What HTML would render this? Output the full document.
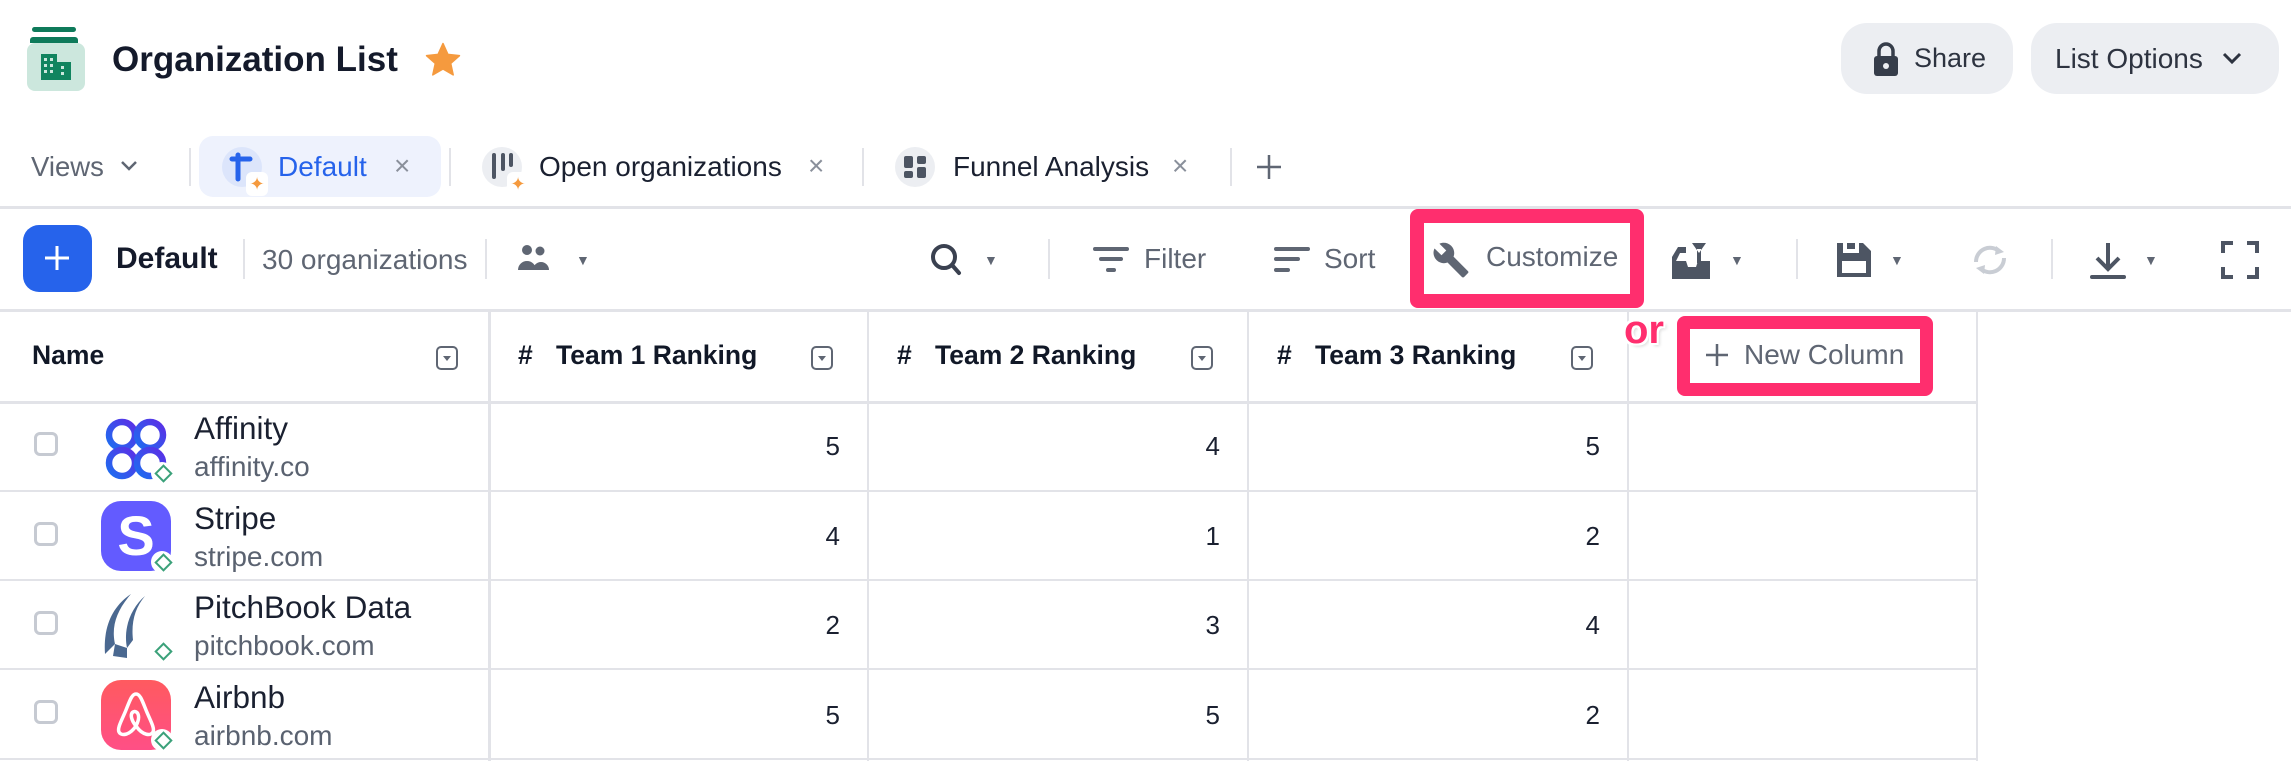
<!DOCTYPE html>
<html><head><meta charset="utf-8"><style>
*{box-sizing:border-box;margin:0;padding:0}
body{width:2291px;height:761px;background:#fff;font-family:"Liberation Sans",sans-serif;position:relative;overflow:hidden;color:#1a202c}
.a{position:absolute}
.t{position:absolute;white-space:nowrap;line-height:1}
.vl{position:absolute;width:2px;background:#e2e3e8}
.hl{position:absolute;height:2px;background:#e2e3e8}
.btn{position:absolute;background:#eceef2;border-radius:26px}
.cb{position:absolute;width:24px;height:24px;border:3px solid #c6cad2;border-radius:6px;left:34px}
.logo{position:absolute;left:101px;width:70px;height:70px}
.dia{position:absolute;left:151px;width:22px;height:22px;background:#fff;border-radius:50%}
.dia:after{content:"";position:absolute;left:6px;top:5px;width:9px;height:9px;border:2px solid #3ba17a;transform:rotate(45deg)}
.nm{position:absolute;left:194px;font-size:31.5px;color:#1a2030;white-space:nowrap;line-height:1}
.dm{position:absolute;left:194px;font-size:28px;color:#5a6270;white-space:nowrap;line-height:1}
.num{position:absolute;font-size:26px;color:#1a2030;text-align:right;width:40px;line-height:1}
.hd{position:absolute;top:342px;font-size:26.5px;font-weight:bold;color:#111827;white-space:nowrap;line-height:1}
.dd{position:absolute;top:346px;width:22px;height:24px;border:2.5px solid #5f6673;border-radius:5px}
.dd:after{content:"";position:absolute;left:5px;top:8px;border-left:4px solid transparent;border-right:4px solid transparent;border-top:5px solid #5f6673}
.gray{color:#5f6673}
</style></head><body>

<div class="a" style="left:32px;top:27px;width:44px;height:5px;background:#0e7a5a;border-radius:3px"></div>
<div class="a" style="left:30px;top:37px;width:48px;height:6px;background:#0e7a5a;border-radius:3px 3px 0 0"></div>
<div class="a" style="left:27px;top:43px;width:58px;height:48px;background:#cce7dd;border-radius:8px"></div>
<svg class="a" style="left:38px;top:52px" width="36" height="30" viewBox="0 0 36 30"><rect x="3" y="2" width="16" height="26" fill="#11845f"/><rect x="19" y="10" width="14" height="18" fill="#11845f"/><g fill="#cce7dd"><rect x="6" y="6" width="3" height="3"/><rect x="12" y="6" width="3" height="3"/><rect x="6" y="12" width="3" height="3"/><rect x="12" y="12" width="3" height="3"/><rect x="6" y="18" width="3" height="3"/><rect x="12" y="18" width="3" height="3"/><rect x="23" y="14" width="3" height="3"/><rect x="23" y="20" width="3" height="3"/></g></svg>
<div class="t" style="left:112px;top:42px;font-size:35px;font-weight:bold;color:#141a2b">Organization List</div>
<svg class="a" style="left:424px;top:42px" width="38" height="36" viewBox="0 0 24 23"><path d="M12 1l3.1 6.9 7.4.8-5.6 5 1.6 7.3L12 17.2 5.5 21l1.6-7.3-5.6-5 7.4-.8z" fill="#f59a3e" stroke="#f59a3e" stroke-linejoin="round"/></svg>

<div class="btn" style="left:1841px;top:23px;width:172px;height:71px"></div>
<svg class="a" style="left:1873px;top:42px" width="26" height="34" viewBox="0 0 26 34"><path d="M6 14V9a7 7 0 0114 0v5" fill="none" stroke="#363d4a" stroke-width="3.5"/><rect x="1" y="14" width="24" height="20" rx="3" fill="#363d4a"/><circle cx="13" cy="24" r="3" fill="#eceef2"/></svg>
<div class="t" style="left:1914px;top:45px;font-size:27px;color:#2d3340">Share</div>
<div class="btn" style="left:2031px;top:23px;width:248px;height:71px"></div>
<div class="t" style="left:2055px;top:45px;font-size:28px;color:#2d3340">List Options</div>
<svg class="a" style="left:2222px;top:52px" width="20" height="14"><path d="M2 2l8 8 8-8" fill="none" stroke="#2d3340" stroke-width="3"/></svg>

<div class="t" style="left:31px;top:153px;font-size:27.5px;color:#5f6673">Views</div>
<svg class="a" style="left:120px;top:160px" width="18" height="12"><path d="M2 2l7 7 7-7" fill="none" stroke="#5f6673" stroke-width="2.5"/></svg>
<div class="vl" style="left:189px;top:148px;height:38px"></div>
<div class="a" style="left:199px;top:136px;width:242px;height:61px;background:#eef2fd;border-radius:14px"></div>
<div class="a" style="left:222px;top:147px;width:40px;height:40px;background:#dce5fb;border-radius:20px"></div>
<svg class="a" style="left:228px;top:152px" width="26" height="30"><path d="M4 7h18M10 3v24" stroke="#2663eb" stroke-width="5" stroke-linecap="round"/></svg>
<div class="a" style="left:246px;top:172px;width:22px;height:24px;background:#fff;border-radius:6px;color:#f59a3e;font-size:18px;text-align:center;line-height:24px">✦</div>
<div class="t" style="left:278px;top:153px;font-size:28px;color:#2663eb">Default</div>
<div class="t" style="left:394px;top:152px;font-size:28px;color:#8a909b">×</div>
<div class="vl" style="left:449px;top:148px;height:38px"></div>
<div class="a" style="left:482px;top:147px;width:40px;height:40px;background:#eceef2;border-radius:20px"></div>
<svg class="a" style="left:490px;top:152px" width="26" height="28"><path d="M4 3v22M13 3v14M21 3v10" stroke="#4d5563" stroke-width="4" stroke-linecap="round"/></svg>
<div class="a" style="left:507px;top:172px;width:22px;height:24px;background:#fff;border-radius:6px;color:#f59a3e;font-size:18px;text-align:center;line-height:24px">✦</div>
<div class="t" style="left:539px;top:153px;font-size:28px;color:#1a2030">Open organizations</div>
<div class="t" style="left:808px;top:152px;font-size:28px;color:#8a909b">×</div>
<div class="vl" style="left:862px;top:148px;height:38px"></div>
<div class="a" style="left:895px;top:147px;width:40px;height:40px;background:#eceef2;border-radius:20px"></div>
<svg class="a" style="left:903px;top:155px" width="24" height="24"><rect x="1" y="1" width="9" height="12" rx="2" fill="#4d5563"/><rect x="14" y="1" width="9" height="8" rx="2" fill="#4d5563"/><rect x="1" y="16" width="9" height="7" rx="2" fill="#4d5563"/><rect x="14" y="12" width="9" height="11" rx="2" fill="#4d5563"/></svg>
<div class="t" style="left:953px;top:153px;font-size:28px;color:#1a2030">Funnel Analysis</div>
<div class="t" style="left:1172px;top:152px;font-size:28px;color:#8a909b">×</div>
<div class="vl" style="left:1230px;top:148px;height:38px"></div>
<svg class="a" style="left:1256px;top:154px" width="26" height="26"><path d="M13 1v24M1 13h24" stroke="#5f6673" stroke-width="2.5"/></svg>

<div class="hl" style="left:0;top:206px;width:2291px;height:3px"></div>

<div class="a" style="left:23px;top:225px;width:69px;height:67px;background:#2663eb;border-radius:16px"></div>
<svg class="a" style="left:43px;top:244px" width="28" height="28"><path d="M14 2v24M2 14h24" stroke="#fff" stroke-width="3"/></svg>
<div class="t" style="left:116px;top:244px;font-size:30px;font-weight:bold;color:#141a2b">Default</div>
<div class="vl" style="left:243px;top:239px;height:40px"></div>
<div class="t" style="left:262px;top:246px;font-size:28px;color:#5f6673">30 organizations</div>
<div class="vl" style="left:485px;top:239px;height:40px"></div>
<svg class="a" style="left:518px;top:244px" width="32" height="28"><circle cx="9" cy="6" r="5" fill="#5f6673"/><circle cx="22" cy="7" r="4.5" fill="#5f6673"/><path d="M0 26a9 9 0 0118 0zM15 26a8 8 0 0116 0z" fill="#5f6673"/></svg>
<div class="t gray" style="left:576px;top:253px;font-size:14px">▼</div>
<svg class="a" style="left:929px;top:242px" width="36" height="36"><circle cx="15" cy="15" r="11" fill="none" stroke="#3a4150" stroke-width="4"/><path d="M23 23l7 8" stroke="#3a4150" stroke-width="4" stroke-linecap="round"/></svg>
<div class="t gray" style="left:984px;top:253px;font-size:14px">▼</div>
<div class="vl" style="left:1048px;top:239px;height:40px"></div>
<svg class="a" style="left:1093px;top:246px" width="38" height="30"><path d="M2 3h32M8 13h20M15 24h6" stroke="#5f6673" stroke-width="4" stroke-linecap="round"/></svg>
<div class="t gray" style="left:1144px;top:245px;font-size:28px">Filter</div>
<svg class="a" style="left:1274px;top:246px" width="38" height="30"><path d="M2 3h32M2 13h22M2 24h12" stroke="#5f6673" stroke-width="4" stroke-linecap="round"/></svg>
<div class="t gray" style="left:1324px;top:245px;font-size:28px">Sort</div>
<div class="a" style="left:1410px;top:209px;width:234px;height:99px;border:14px solid #ff2e6e;border-radius:8px"></div>
<svg class="a" style="left:1432px;top:240px" width="38" height="40" viewBox="0 0 24 24"><path d="M22.7 19l-9.1-9.1c.9-2.3.4-5-1.5-6.9-2-2-5-2.4-7.4-1.3L9 6 6 9 1.6 4.7C.4 7.1.9 10.1 2.9 12.1c1.9 1.9 4.6 2.4 6.9 1.5l9.1 9.1c.4.4 1 .4 1.4 0l2.3-2.3c.5-.4.5-1.1.1-1.4z" fill="#5f6673"/></svg>
<div class="t gray" style="left:1486px;top:243px;font-size:28px">Customize</div>
<svg class="a" style="left:1670px;top:241px" width="44" height="38"><path d="M2 38V16l6-10h8v6H10l-4 8h10l2 6h8l2-6h12v18z" fill="#4d5563"/><path d="M22 2h14l-7 10z M27 8v14h4V8" fill="#4d5563"/></svg>
<div class="t gray" style="left:1730px;top:253px;font-size:14px">▼</div>
<div class="vl" style="left:1796px;top:239px;height:40px"></div>
<svg class="a" style="left:1835px;top:241px" width="38" height="38"><path d="M2 2h26l8 8v26H2z" fill="#4d5563"/><rect x="8" y="2" width="16" height="10" fill="#fff"/><rect x="12" y="2" width="8" height="6" fill="#4d5563"/><rect x="7" y="20" width="24" height="12" fill="#fff"/></svg>
<div class="t gray" style="left:1890px;top:253px;font-size:14px">▼</div>
<svg class="a" style="left:1970px;top:242px" width="40" height="36"><path d="M6 20a14 14 0 0124-10M34 16a14 14 0 01-24 10" fill="none" stroke="#c9cdd4" stroke-width="4"/><path d="M26 4l8 6-9 3zM14 32l-8-6 9-3z" fill="#c9cdd4"/></svg>
<div class="vl" style="left:2051px;top:239px;height:40px"></div>
<svg class="a" style="left:2089px;top:241px" width="38" height="38"><path d="M19 2v26M8 17l11 11 11-11" fill="none" stroke="#4d5563" stroke-width="4"/><path d="M3 36h32" stroke="#4d5563" stroke-width="4" stroke-linecap="round"/></svg>
<div class="t gray" style="left:2144px;top:253px;font-size:14px">▼</div>
<svg class="a" style="left:2221px;top:241px" width="38" height="38"><path d="M2 12V2h10M26 2h10v10M36 26v10H26M12 36H2V26" fill="none" stroke="#4d5563" stroke-width="4"/></svg>

<div class="hl" style="left:0;top:309px;width:2291px;height:3px"></div>

<div class="vl" style="left:488px;top:311px;height:450px;width:3px"></div>
<div class="vl" style="left:867px;top:311px;height:450px"></div>
<div class="vl" style="left:1247px;top:311px;height:450px"></div>
<div class="vl" style="left:1627px;top:311px;height:450px"></div>
<div class="vl" style="left:1976px;top:311px;height:450px"></div>
<div class="hl" style="left:0;top:401px;width:1978px;height:3px"></div>
<div class="hl" style="left:0;top:490px;width:1978px"></div>
<div class="hl" style="left:0;top:579px;width:1978px"></div>
<div class="hl" style="left:0;top:668px;width:1978px"></div>
<div class="hl" style="left:0;top:758px;width:1978px"></div>

<div class="hd" style="left:32px">Name</div><div class="dd" style="left:436px"></div>
<div class="hd" style="left:518px">#</div><div class="hd" style="left:556px">Team 1 Ranking</div><div class="dd" style="left:811px"></div>
<div class="hd" style="left:897px">#</div><div class="hd" style="left:935px">Team 2 Ranking</div><div class="dd" style="left:1191px"></div>
<div class="hd" style="left:1277px">#</div><div class="hd" style="left:1315px">Team 3 Ranking</div><div class="dd" style="left:1571px"></div>

<div class="t" style="left:1624px;top:310px;font-size:40px;font-weight:bold;color:#ff2e6e;text-shadow:2px 2px 0 #fff,-2px -2px 0 #fff,2px -2px 0 #fff,-2px 2px 0 #fff,3px 3px 3px rgba(0,0,0,.15)">or</div>
<div class="a" style="left:1677px;top:316px;width:256px;height:80px;border:13px solid #ff2e6e;border-radius:8px"></div>
<svg class="a" style="left:1705px;top:343px" width="24" height="24"><path d="M12 1v22M1 12h22" stroke="#5f6673" stroke-width="2.5"/></svg>
<div class="t gray" style="left:1744px;top:341px;font-size:28px">New Column</div>

<div class="cb" style="top:432px"></div>
<svg class="logo" style="top:415px" viewBox="0 0 70 70"><defs><linearGradient id="g" x1="0" y1="1" x2="1" y2="0"><stop offset="0" stop-color="#1d6ef0"/><stop offset="1" stop-color="#5b2fe6"/></linearGradient></defs><g fill="none" stroke="url(#g)" stroke-width="6.5"><circle cx="21" cy="20" r="13"/><circle cx="49" cy="20" r="13"/><circle cx="21" cy="48" r="13"/><circle cx="49" cy="48" r="13"/></g></svg>
<div class="dia" style="top:462px"></div>
<div class="nm" style="top:413px">Affinity</div>
<div class="dm" style="top:453px">affinity.co</div>
<div class="num" style="left:800px;top:433px">5</div><div class="num" style="left:1180px;top:433px">4</div><div class="num" style="left:1560px;top:433px">5</div>

<div class="cb" style="top:522px"></div>
<div class="logo" style="top:501px;background:#635bff;border-radius:20px;color:#fff;font-size:56px;font-weight:bold;text-align:center;line-height:70px">S</div>
<div class="dia" style="top:551px"></div>
<div class="nm" style="top:503px">Stripe</div>
<div class="dm" style="top:543px">stripe.com</div>
<div class="num" style="left:800px;top:523px">4</div><div class="num" style="left:1180px;top:523px">1</div><div class="num" style="left:1560px;top:523px">2</div>

<div class="cb" style="top:611px"></div>
<svg class="logo" style="top:592px" viewBox="0 0 70 70"><path d="M30 2C12 14 2 34 4 62l10-10C10 34 16 18 30 2z M44 4C30 16 22 36 26 56l6-8c-2-18 2-32 12-44z" fill="#4a6890"/><path d="M14 52l12 4 0 10-14-2z" fill="#4a6890"/></svg>
<div class="dia" style="top:640px"></div>
<div class="nm" style="top:592px">PitchBook Data</div>
<div class="dm" style="top:632px">pitchbook.com</div>
<div class="num" style="left:800px;top:612px">2</div><div class="num" style="left:1180px;top:612px">3</div><div class="num" style="left:1560px;top:612px">4</div>

<div class="cb" style="top:700px"></div>
<svg class="logo" style="top:680px" viewBox="0 0 70 70"><defs><linearGradient id="r" x1="0" y1="0" x2="0" y2="1"><stop offset="0" stop-color="#ff5a5f"/><stop offset="1" stop-color="#ff4f86"/></linearGradient></defs><rect width="70" height="70" rx="20" fill="url(#r)"/><path d="M35 14c-4 0-6 6-10 16s-9 18-7 22 10 4 17-6c7 10 15 10 17 6s-3-12-7-22-6-16-10-16zM35 46c-5-6-6-12-3-14s9 2 3 14z" fill="none" stroke="#fff" stroke-width="3.5" stroke-linejoin="round"/></svg>
<div class="dia" style="top:729px"></div>
<div class="nm" style="top:682px">Airbnb</div>
<div class="dm" style="top:722px">airbnb.com</div>
<div class="num" style="left:800px;top:702px">5</div><div class="num" style="left:1180px;top:702px">5</div><div class="num" style="left:1560px;top:702px">2</div>
</body></html>
